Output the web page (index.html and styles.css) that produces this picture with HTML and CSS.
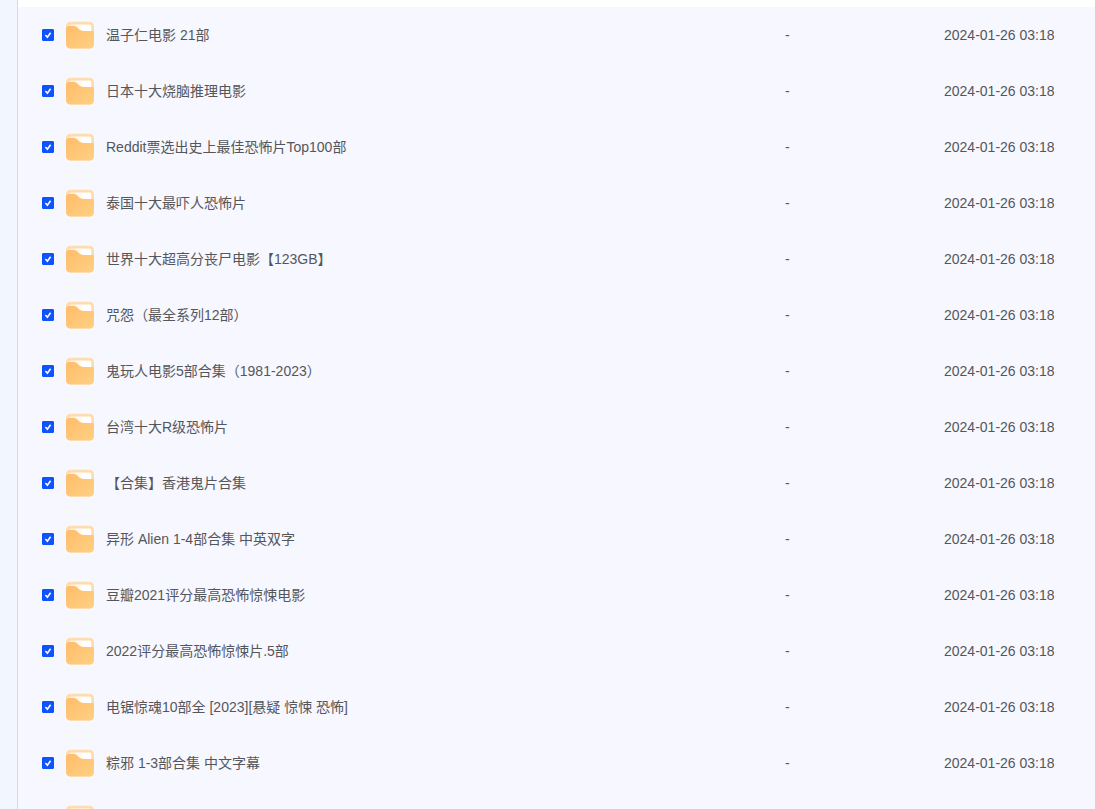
FILE: index.html
```html
<!DOCTYPE html>
<html lang="zh-CN">
<head>
<meta charset="utf-8">
<meta name="viewport" content="width=device-width, initial-scale=1">
<title>文件列表</title>
<link rel="stylesheet" href="styles.css">
</head>
<body>
<svg class="sprite" aria-hidden="true">
  <defs>
    <linearGradient id="folder-front" x1="0" y1="0" x2="1" y2="1">
      <stop offset="0" stop-color="#ffbd6b"/>
      <stop offset="1" stop-color="#ffd083"/>
    </linearGradient>
    <linearGradient id="folder-paper" x1="0" y1="0" x2="1" y2="0">
      <stop offset="0" stop-color="#ffe9cd"/>
      <stop offset="0.6" stop-color="#ffffff"/>
    </linearGradient>
  </defs>
  <symbol id="folder" viewBox="0 0 28 28">
    <rect x="0" y="0.8" width="28" height="27" rx="4.5" fill="#ffdcae"/>
    <path d="M2.8 8V6Q2.8 3.5 5.3 3.5H22.8Q25.3 3.5 25.3 6V12H2.8Z" fill="url(#folder-paper)"/>
    <path d="M0 8.3Q0 5.1 3.2 5.1H7.6Q9.8 5.1 11.3 6.5L13.4 8.6Q15 10 17.2 10H28V22.8Q28 27.3 23.5 27.3H4.5Q0 27.3 0 22.8Z" fill="url(#folder-front)"/>
  </symbol>
</svg>
<div class="app">
  <aside class="sidebar"></aside>
  <main class="content">
    <table class="files">
      <colgroup><col class="col-name"><col class="col-size"><col class="col-date"></colgroup>
      <tbody>
        <tr><td><div class="file"><input class="check" type="checkbox" id="f1" checked><svg class="icon"><use href="#folder"/></svg><label for="f1">温子仁电影 21部</label></div></td><td>-</td><td>2024-01-26 03:18</td></tr>
        <tr><td><div class="file"><input class="check" type="checkbox" id="f2" checked><svg class="icon"><use href="#folder"/></svg><label for="f2">日本十大烧脑推理电影</label></div></td><td>-</td><td>2024-01-26 03:18</td></tr>
        <tr><td><div class="file"><input class="check" type="checkbox" id="f3" checked><svg class="icon"><use href="#folder"/></svg><label for="f3">Reddit票选出史上最佳恐怖片Top100部</label></div></td><td>-</td><td>2024-01-26 03:18</td></tr>
        <tr><td><div class="file"><input class="check" type="checkbox" id="f4" checked><svg class="icon"><use href="#folder"/></svg><label for="f4">泰国十大最吓人恐怖片</label></div></td><td>-</td><td>2024-01-26 03:18</td></tr>
        <tr><td><div class="file"><input class="check" type="checkbox" id="f5" checked><svg class="icon"><use href="#folder"/></svg><label for="f5">世界十大超高分丧尸电影【123GB】</label></div></td><td>-</td><td>2024-01-26 03:18</td></tr>
        <tr><td><div class="file"><input class="check" type="checkbox" id="f6" checked><svg class="icon"><use href="#folder"/></svg><label for="f6">咒怨（最全系列12部）</label></div></td><td>-</td><td>2024-01-26 03:18</td></tr>
        <tr><td><div class="file"><input class="check" type="checkbox" id="f7" checked><svg class="icon"><use href="#folder"/></svg><label for="f7">鬼玩人电影5部合集（1981-2023）</label></div></td><td>-</td><td>2024-01-26 03:18</td></tr>
        <tr><td><div class="file"><input class="check" type="checkbox" id="f8" checked><svg class="icon"><use href="#folder"/></svg><label for="f8">台湾十大R级恐怖片</label></div></td><td>-</td><td>2024-01-26 03:18</td></tr>
        <tr><td><div class="file"><input class="check" type="checkbox" id="f9" checked><svg class="icon"><use href="#folder"/></svg><label for="f9">【合集】香港鬼片合集</label></div></td><td>-</td><td>2024-01-26 03:18</td></tr>
        <tr><td><div class="file"><input class="check" type="checkbox" id="f10" checked><svg class="icon"><use href="#folder"/></svg><label for="f10">异形 Alien 1-4部合集 中英双字</label></div></td><td>-</td><td>2024-01-26 03:18</td></tr>
        <tr><td><div class="file"><input class="check" type="checkbox" id="f11" checked><svg class="icon"><use href="#folder"/></svg><label for="f11">豆瓣2021评分最高恐怖惊悚电影</label></div></td><td>-</td><td>2024-01-26 03:18</td></tr>
        <tr><td><div class="file"><input class="check" type="checkbox" id="f12" checked><svg class="icon"><use href="#folder"/></svg><label for="f12">2022评分最高恐怖惊悚片.5部</label></div></td><td>-</td><td>2024-01-26 03:18</td></tr>
        <tr><td><div class="file"><input class="check" type="checkbox" id="f13" checked><svg class="icon"><use href="#folder"/></svg><label for="f13">电锯惊魂10部全 [2023][悬疑 惊悚 恐怖]</label></div></td><td>-</td><td>2024-01-26 03:18</td></tr>
        <tr><td><div class="file"><input class="check" type="checkbox" id="f14" checked><svg class="icon"><use href="#folder"/></svg><label for="f14">粽邪 1-3部合集 中文字幕</label></div></td><td>-</td><td>2024-01-26 03:18</td></tr>
        <tr><td><div class="file"><input class="check" type="checkbox" id="f15" checked><svg class="icon"><use href="#folder"/></svg><label for="f15"></label></div></td><td></td><td></td></tr>
      </tbody>
    </table>
  </main>
</div>
</body>
</html>
```
FILE: styles.css
```css
* {
  box-sizing: border-box;
}

body {
  margin: 0;
  background: #fff;
  color: #55565a;
  font: 14px/20px "Liberation Sans", Arial, "Noto Sans CJK SC", sans-serif;
}

.sprite {
  display: block;
  width: 0;
  height: 0;
}

.app {
  display: flex;
  height: 100vh;
  overflow: hidden;
}

.sidebar {
  flex: 0 0 18px;
  background: #f2f6ff;
  border-right: 1px solid #d9dadf;
}

.content {
  flex: 1;
  min-width: 0;
  padding-top: 7px;
}

.files {
  width: 100%;
  padding-left: 24px;
  border-collapse: separate;
  border-spacing: 0;
  table-layout: fixed;
  background: #f6f7ff;
}

.col-size {
  width: 159px;
}

.col-date {
  width: 151px;
}

.files td {
  height: 56px;
  padding: 0;
  border-bottom: 1px solid #f5f6fb;
  white-space: nowrap;
}

.file {
  display: flex;
  align-items: center;
}

.check {
  appearance: none;
  flex: none;
  width: 12px;
  height: 12px;
  margin: 0 12px 0 0;
  border: 1px solid #0d53ff;
  border-radius: 1px;
  background: #fff;
}

.check:checked {
  background: #0d53ff url("data:image/svg+xml,%3Csvg xmlns='http://www.w3.org/2000/svg' viewBox='0 0 10 10'%3E%3Cpath d='M2.4 5L4.4 7.2L7.6 2.8' fill='none' stroke='white' stroke-width='1.6'/%3E%3C/svg%3E") center / 10px 10px no-repeat;
}

.icon {
  flex: none;
  width: 28px;
  height: 28px;
  margin-right: 12px;
}
```
